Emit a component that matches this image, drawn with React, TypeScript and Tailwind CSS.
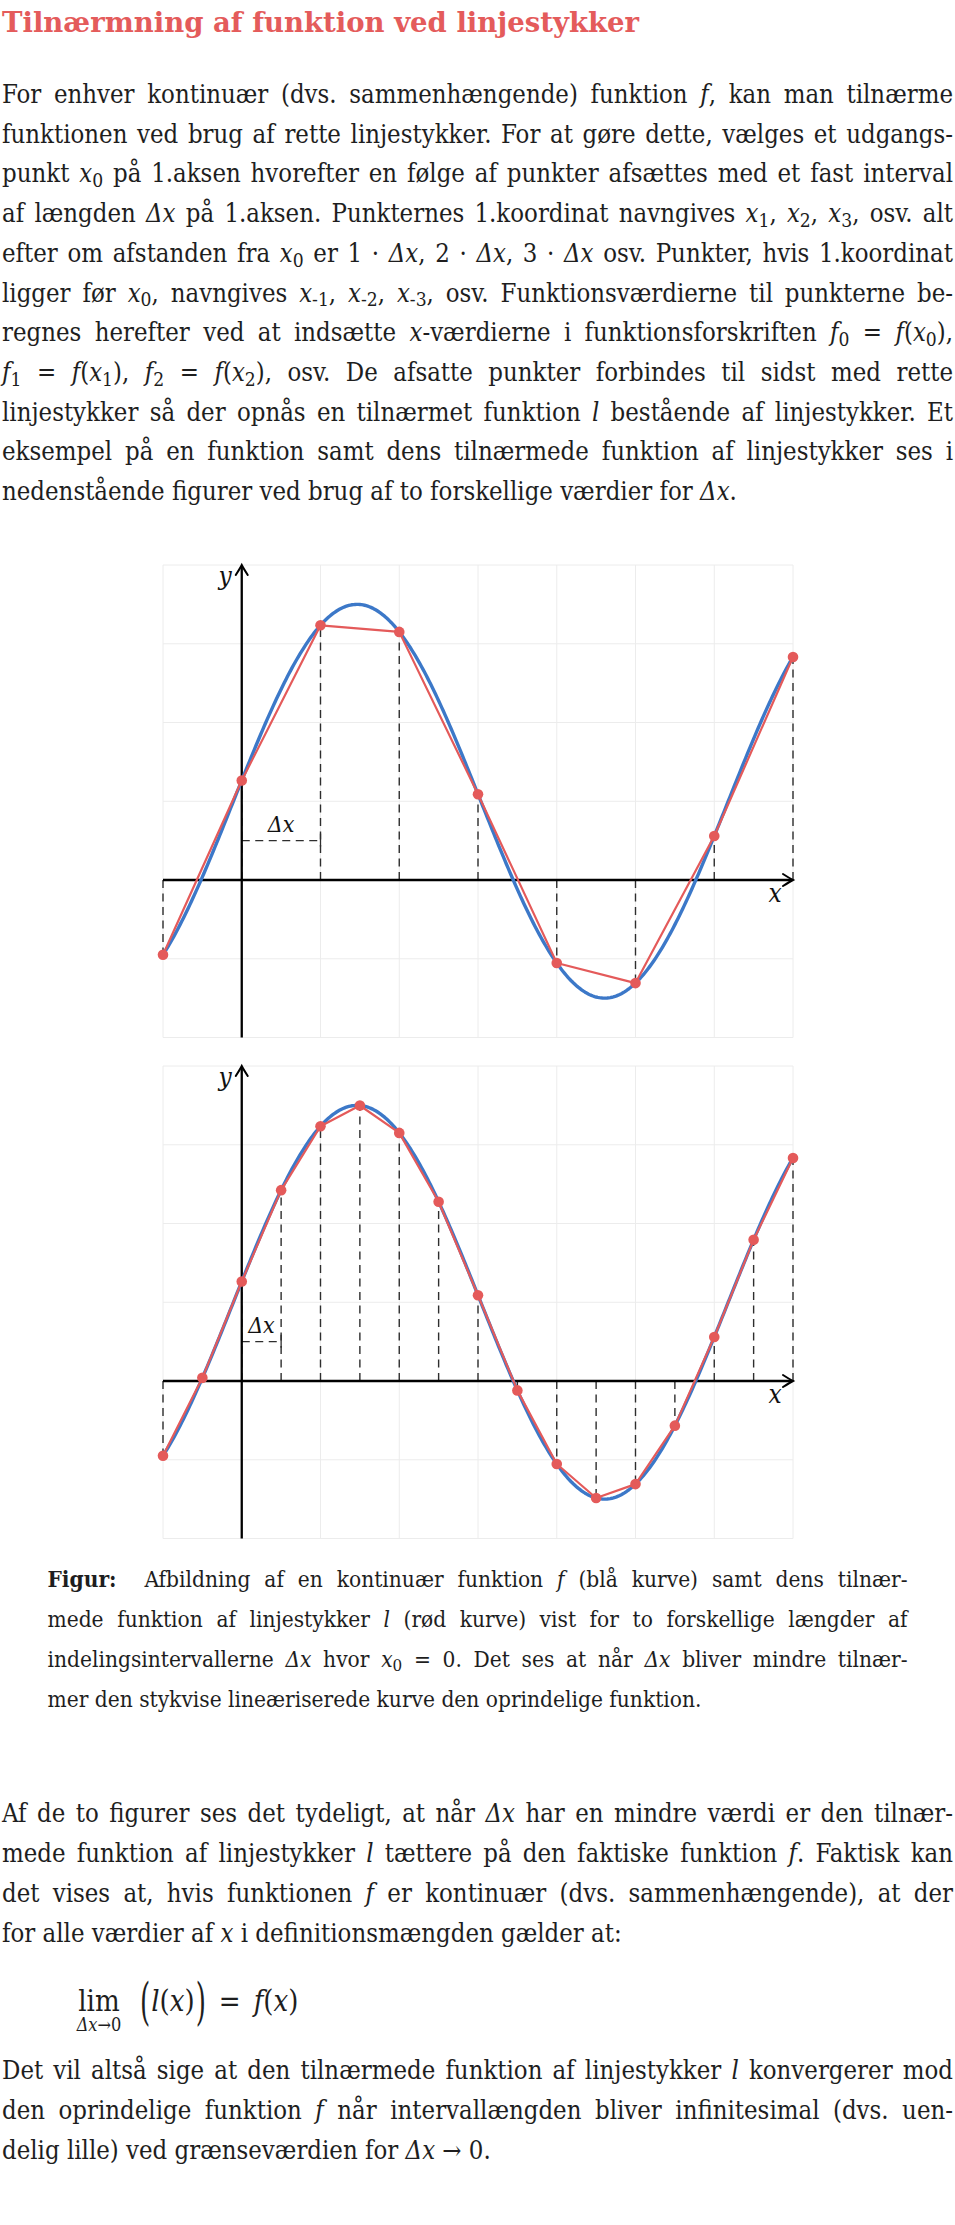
import React from 'react';

const U = 78.75;
const W = 8 * U;
const H = 6 * U;
const BLUE = '#3c78c8';
const RED = '#e45a5a';
const SERIF = "'DejaVu Serif Condensed', 'Liberation Serif', serif";

const f = (x: number) => 1 + 2.5 * Math.sin(x + 0.1058);
const px = (x: number) => (x + 1) * U;
const py = (y: number) => (4 - y) * U;

function Graph({ dx }: { dx: number }) {
  const n = Math.round(8 / dx);
  const pts = Array.from({ length: n + 1 }, (_, i) => -1 + i * dx);
  const curve = Array.from({ length: 401 }, (_, i) => {
    const x = -1 + i * 0.02;
    return `${px(x).toFixed(2)},${py(f(x)).toFixed(2)}`;
  }).join(' ');
  const poly = pts.map((x) => `${px(x).toFixed(2)},${py(f(x)).toFixed(2)}`).join(' ');
  const X0 = px(0);
  const Y0 = py(0);

  return (
    <svg width={W} height={H} viewBox={`0 0 ${W} ${H}`} className="mx-auto block overflow-visible">
      {/* grid */}
      {Array.from({ length: 9 }, (_, i) => (
        <line key={'v' + i} x1={i * U} y1={0} x2={i * U} y2={H} stroke="#ececec" strokeWidth={1} />
      ))}
      {Array.from({ length: 7 }, (_, j) => (
        <line key={'h' + j} x1={0} y1={j * U} x2={W} y2={j * U} stroke="#ececec" strokeWidth={1} />
      ))}

      {/* dashed drop lines */}
      {pts.map((x) => (
        <line key={'d' + x} x1={px(x)} y1={Y0} x2={px(x)} y2={py(f(x))}
          stroke="#2e2e2e" strokeWidth={1.4} strokeDasharray="8 5.5" />
      ))}

      {/* delta x marker */}
      <line x1={X0} y1={py(0.5)} x2={px(dx)} y2={py(0.5)} stroke="#2e2e2e" strokeWidth={1.4} strokeDasharray="8 5.5" />
      <line x1={px(dx)} y1={py(0.5) - 7} x2={px(dx)} y2={py(0.5) + 6} stroke="#2e2e2e" strokeWidth={1.3} />
      <text x={px(dx / 2)} y={Y0 - 48} textAnchor="middle" fontFamily={SERIF} fontStyle="italic" fontSize={23} fill="#111">
        Δx
      </text>

      {/* axes */}
      <line x1={0} y1={Y0} x2={W - 1} y2={Y0} stroke="#000" strokeWidth={2.3} />
      <line x1={X0} y1={H} x2={X0} y2={1} stroke="#000" strokeWidth={2.3} />
      <path d={`M ${W - 10} ${Y0 - 6} Q ${W - 3} ${Y0 - 1.5} ${W} ${Y0} Q ${W - 3} ${Y0 + 1.5} ${W - 10} ${Y0 + 6}`}
        fill="none" stroke="#000" strokeWidth={2} strokeLinecap="round" />
      <path d={`M ${X0 - 6} 10 Q ${X0 - 1.5} 3 ${X0} 0 Q ${X0 + 1.5} 3 ${X0 + 6} 10`}
        fill="none" stroke="#000" strokeWidth={2} strokeLinecap="round" />
      <text x={62} y={20} textAnchor="middle" fontFamily={SERIF} fontStyle="italic" fontSize={26} fill="#111">y</text>
      <text x={612} y={Y0 + 22} textAnchor="middle" fontFamily={SERIF} fontStyle="italic" fontSize={26} fill="#111">x</text>

      {/* function and approximation */}
      <polyline points={curve} fill="none" stroke={BLUE} strokeWidth={3.4} strokeLinejoin="round" />
      <polyline points={poly} fill="none" stroke={RED} strokeWidth={2.2} strokeLinejoin="round" />
      {pts.map((x) => (
        <circle key={'p' + x} cx={px(x)} cy={py(f(x))} r={5.3} fill={RED} />
      ))}
    </svg>
  );
}

function L({ children, last }: { children: React.ReactNode; last?: boolean }) {
  return (
    <div className={last ? 'whitespace-nowrap text-left' : 'whitespace-nowrap text-justify [text-align-last:justify]'}>
      {children}
    </div>
  );
}

const M = ({ children }: { children: React.ReactNode }) => <i>{children}</i>;
const X = ({ s }: { s: string }) => (
  <>
    <i>x</i>
    <sub>{s}</sub>
  </>
);
const DX = () => <i>Δx</i>;

export default function App() {
  return (
    <div className="min-h-[2225px] w-[955px] bg-white text-[#1e1e1e] [font-family:'DejaVu_Serif_Condensed','Liberation_Serif',serif]">
      <h1 className="px-[2px] pt-[2px] text-[27.5px] font-bold leading-[40px] text-[#e45b5b] [font-family:'DejaVu_Serif',serif]">
        Tilnærmning af funktion ved linjestykker
      </h1>

      {/* Intro */}
      <div className="mt-[33px] px-[2px] text-[25.5px] leading-[39.7px]">
        <L>For enhver kontinuær (dvs. sammenhængende) funktion <M>f</M>, kan man tilnærme</L>
        <L>funktionen ved brug af rette linjestykker. For at gøre dette, vælges et udgangs-</L>
        <L>punkt <X s="0" /> på 1.aksen hvorefter en følge af punkter afsættes med et fast interval</L>
        <L>af længden <DX /> på 1.aksen. Punkternes 1.koordinat navngives <X s="1" />, <X s="2" />, <X s="3" />, osv. alt</L>
        <L>efter om afstanden fra <X s="0" /> er 1 · <DX />, 2 · <DX />, 3 · <DX /> osv. Punkter, hvis 1.koordinat</L>
        <L>ligger før <X s="0" />, navngives <X s="-1" />, <X s="-2" />, <X s="-3" />, osv. Funktionsværdierne til punkterne be-</L>
        <L>regnes herefter ved at indsætte <M>x</M>-værdierne i funktionsforskriften <M>f</M><sub>0</sub> = <M>f</M>(<X s="0" />),</L>
        <L><M>f</M><sub>1</sub> = <M>f</M>(<X s="1" />), <M>f</M><sub>2</sub> = <M>f</M>(<X s="2" />), osv. De afsatte punkter forbindes til sidst med rette</L>
        <L>linjestykker så der opnås en tilnærmet funktion <M>l</M> bestående af linjestykker. Et</L>
        <L>eksempel på en funktion samt dens tilnærmede funktion af linjestykker ses i</L>
        <L last>nedenstående figurer ved brug af to forskellige værdier for <DX />.</L>
      </div>

      {/* Figures */}
      <div className="mt-[53px]">
        <Graph dx={1} />
      </div>
      <div className="mt-[28.5px]">
        <Graph dx={0.5} />
      </div>

      {/* Caption */}
      <div className="mt-[20.5px] px-[47.5px] text-[22.5px] leading-[40px]">
        <L><b>Figur:</b>{'\u00a0 '}Afbildning af en kontinuær funktion <M>f</M> (blå kurve) samt dens tilnær-</L>
        <L>mede funktion af linjestykker <M>l</M> (rød kurve) vist for to forskellige længder af</L>
        <L>indelingsintervallerne <DX /> hvor <X s="0" /> = 0. Det ses at når <DX /> bliver mindre tilnær-</L>
        <L last>mer den stykvise lineæriserede kurve den oprindelige funktion.</L>
      </div>

      {/* Conclusion */}
      <div className="mt-[75.7px] px-[2px] text-[25.5px] leading-[39.7px]">
        <L>Af de to figurer ses det tydeligt, at når <DX /> har en mindre værdi er den tilnær-</L>
        <L>mede funktion af linjestykker <M>l</M> tættere på den faktiske funktion <M>f</M>. Faktisk kan</L>
        <L>det vises at, hvis funktionen <M>f</M> er kontinuær (dvs. sammenhængende), at der</L>
        <L last>for alle værdier af <M>x</M> i definitionsmængden gælder at:</L>
      </div>

      {/* Limit */}
      <div className="flex h-[98px] items-baseline pl-[66px] pt-[35px] text-[29px]">
        <div className="flex w-[66px] flex-col items-center">
          <span className="leading-[26px]">lim</span>
          <span className="mt-[2px] whitespace-nowrap text-[18px] leading-[18px]">
            <i>Δx</i>→0
          </span>
        </div>
        <span className="ml-[8px] inline-block scale-y-[1.75] leading-[26px]">(</span>
        <span className="px-[1px] leading-[26px]">
          <M>l</M>(<M>x</M>)
        </span>
        <span className="inline-block scale-y-[1.75] leading-[26px]">)</span>
        <span className="mx-[13px] leading-[26px]">=</span>
        <span className="leading-[26px]">
          <M>f</M>(<M>x</M>)
        </span>
      </div>

      {/* Closing */}
      <div className="px-[2px] text-[25.5px] leading-[39.7px]">
        <L>Det vil altså sige at den tilnærmede funktion af linjestykker <M>l</M> konvergerer mod</L>
        <L>den oprindelige funktion <M>f</M> når intervallængden bliver infinitesimal (dvs. uen-</L>
        <L last>delig lille) ved grænseværdien for <DX /> → 0.</L>
      </div>
    </div>
  );
}
